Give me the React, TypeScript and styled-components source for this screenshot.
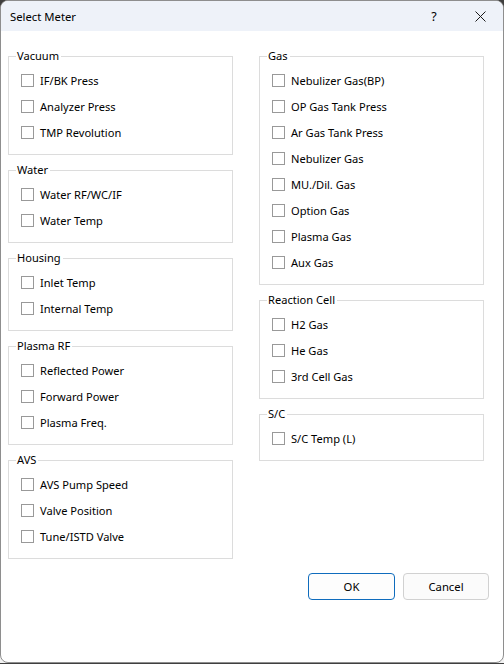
import styled, { createGlobalStyle } from 'styled-components'

const Global = createGlobalStyle`
  html, body {
    margin: 0;
    padding: 0;
  }
  body {
    background: linear-gradient(#3f3f3f 0, #3f3f3f 40px, #f2f2f2 40px);
    font-family: "Segoe UI", "Noto Sans", sans-serif;
    font-size: 11.1px;
    color: #000;
  }
`

const Window = styled.div`
  width: 504px;
  height: 663px;
  box-sizing: border-box;
  border: 1px solid #8e8e8e;
  border-radius: 8px;
  background: #fff;
  overflow: hidden;
  display: flex;
  flex-direction: column;
`

const TitleBar = styled.div`
  height: 30px;
  flex: none;
  background: #eef2f9;
  display: flex;
  align-items: center;
  padding-left: 9px;
  font-size: 11.3px;
`

const Title = styled.div`
  flex: 1;
`

const TitleBtn = styled.div<{ $w: number }>`
  width: ${(p) => p.$w}px;
  height: 30px;
  display: flex;
  align-items: center;
  justify-content: center;
  font-size: 12.5px;
`

const Body = styled.div`
  padding: 17px 14px 0 7px;
  display: flex;
  flex-direction: column;
`

const Columns = styled.div`
  display: grid;
  grid-template-columns: 225px 225px;
  column-gap: 26px;
  align-items: start;
`

const Column = styled.div`
  display: flex;
  flex-direction: column;
  gap: 7px;
`

const Group = styled.fieldset`
  margin: 0;
  min-width: 0;
  border: 1px solid #dcdcdc;
  padding: 3px 0 9px 12px;
`

const Legend = styled.legend`
  padding: 0 2px 0 1px;
  margin-left: -5px;
  line-height: 16px;
  font-size: 11.1px;
`

const Row = styled.label`
  height: 26px;
  display: flex;
  align-items: center;
  gap: 6px;
  white-space: nowrap;
`

const Box = styled.span`
  width: 11px;
  height: 11px;
  flex: none;
  border: 1px solid #999;
  background: #fff;
`

const Footer = styled.div`
  margin-top: 14px;
  display: flex;
  justify-content: flex-end;
  gap: 8px;
`

const Button = styled.button<{ $primary?: boolean }>`
  width: ${(p) => (p.$primary ? 87 : 86)}px;
  height: 27px;
  box-sizing: border-box;
  border-radius: 4px;
  border: 1px solid ${(p) => (p.$primary ? '#0f6cbd' : '#d1d1d1')};
  background: ${(p) => (p.$primary ? '#fdfdfd' : '#fbfbfb')};
  font-family: inherit;
  font-size: 11.3px;
  color: #000;
  padding: 0;
`

const groups: { left: [string, string[]][]; right: [string, string[]][] } = {
  left: [
    ['Vacuum', ['IF/BK Press', 'Analyzer Press', 'TMP Revolution']],
    ['Water', ['Water RF/WC/IF', 'Water Temp']],
    ['Housing', ['Inlet Temp', 'Internal Temp']],
    ['Plasma RF', ['Reflected Power', 'Forward Power', 'Plasma Freq.']],
    ['AVS', ['AVS Pump Speed', 'Valve Position', 'Tune/ISTD Valve']],
  ],
  right: [
    [
      'Gas',
      [
        'Nebulizer Gas(BP)',
        'OP Gas Tank Press',
        'Ar Gas Tank Press',
        'Nebulizer Gas',
        'MU./Dil. Gas',
        'Option Gas',
        'Plasma Gas',
        'Aux Gas',
      ],
    ],
    ['Reaction Cell', ['H2 Gas', 'He Gas', '3rd Cell Gas']],
    ['S/C', ['S/C Temp (L)']],
  ],
}

function GroupBox({ name, items }: { name: string; items: string[] }) {
  return (
    <Group>
      <Legend>{name}</Legend>
      {items.map((it) => (
        <Row key={it}>
          <Box />
          {it}
        </Row>
      ))}
    </Group>
  )
}

export default function App() {
  return (
    <>
      <Global />
      <Window>
        <TitleBar>
          <Title>Select Meter</Title>
          <TitleBtn $w={46}>?</TitleBtn>
          <TitleBtn $w={46}>
            <svg width="11" height="11" viewBox="0 0 11 11">
              <path d="M0.5 0.5 L10.5 10.5 M10.5 0.5 L0.5 10.5" stroke="#1a1a1a" strokeWidth="1" />
            </svg>
          </TitleBtn>
        </TitleBar>
        <Body>
          <Columns>
            <Column>
              {groups.left.map(([n, items]) => (
                <GroupBox key={n} name={n} items={items} />
              ))}
            </Column>
            <Column>
              {groups.right.map(([n, items]) => (
                <GroupBox key={n} name={n} items={items} />
              ))}
            </Column>
          </Columns>
          <Footer>
            <Button $primary>OK</Button>
            <Button>Cancel</Button>
          </Footer>
        </Body>
      </Window>
    </>
  )
}
